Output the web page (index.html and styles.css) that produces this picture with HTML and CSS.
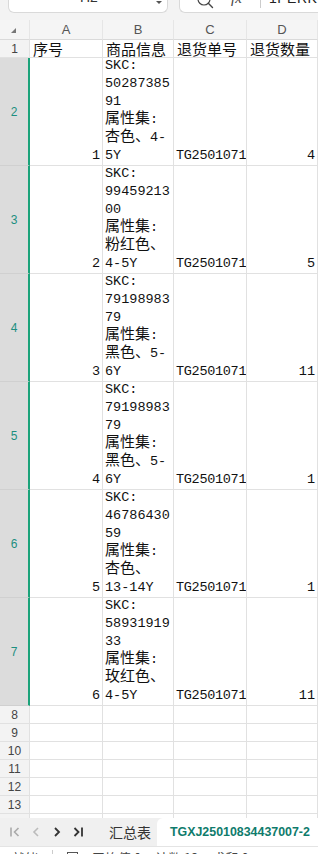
FILE: index.html
```html
<!DOCTYPE html>
<html lang="zh">
<head>
  <meta charset="UTF-8" />
  <meta name="viewport" content="width=device-width, initial-scale=1.0"/>
  <title>TGXJ25010834437007-2</title>
  <link rel="stylesheet" href="styles.css">
</head>
<body>
  <div class="app">
    <!-- Formula bar -->
    <div class="topbar">
      <div class="namebox">
        <span class="name">H2</span>
        <span class="caret"></span>
      </div>
      <div class="formula">
        <svg class="search" width="20" height="10" viewBox="0 0 20 10">
          <circle cx="8" cy="-1" r="6" fill="none" stroke="#444" stroke-width="1.2"/>
          <path d="M12.3 3.3 L16.5 7.5" stroke="#444" stroke-width="1.4" stroke-linecap="round"/>
        </svg>
        <span class="fx">fx</span>
        <span class="sep"></span>
        <span class="ftext">1PERK</span>
      </div>
    </div>

    <!-- Grid -->
    <div class="sheet">
      <div class="row colhead">
        <div class="corner"><span class="tri"></span></div>
        <div>A</div><div>B</div><div>C</div><div>D</div>
      </div>

      <div class="row r-head">
        <div class="rh">1</div>
        <div class="c">序号</div>
        <div class="c">商品信息</div>
        <div class="c">退货单号</div>
        <div class="c">退货数量</div>
      </div>

      <div class="row r-tall sel">
        <div class="rh">2</div>
        <div class="c num">1</div>
        <div class="c wrap"><p>SKC:<br>50287385<br>91<br><span class="zh">属性集</span>:<br><span class="zh">杏色、</span>4-<br>5Y</p></div>
        <div class="c bot">TG2501071</div>
        <div class="c num">4</div>
      </div>

      <div class="row r-tall sel">
        <div class="rh">3</div>
        <div class="c num">2</div>
        <div class="c wrap"><p>SKC:<br>99459213<br>00<br><span class="zh">属性集</span>:<br><span class="zh">粉红色、</span><br>4-5Y</p></div>
        <div class="c bot">TG2501071</div>
        <div class="c num">5</div>
      </div>

      <div class="row r-tall sel">
        <div class="rh">4</div>
        <div class="c num">3</div>
        <div class="c wrap"><p>SKC:<br>79198983<br>79<br><span class="zh">属性集</span>:<br><span class="zh">黑色、</span>5-<br>6Y</p></div>
        <div class="c bot">TG2501071</div>
        <div class="c num">11</div>
      </div>

      <div class="row r-tall sel">
        <div class="rh">5</div>
        <div class="c num">4</div>
        <div class="c wrap"><p>SKC:<br>79198983<br>79<br><span class="zh">属性集</span>:<br><span class="zh">黑色、</span>5-<br>6Y</p></div>
        <div class="c bot">TG2501071</div>
        <div class="c num">1</div>
      </div>

      <div class="row r-tall sel">
        <div class="rh">6</div>
        <div class="c num">5</div>
        <div class="c wrap"><p>SKC:<br>46786430<br>59<br><span class="zh">属性集</span>:<br><span class="zh">杏色、</span><br>13-14Y</p></div>
        <div class="c bot">TG2501071</div>
        <div class="c num">1</div>
      </div>

      <div class="row r-tall sel">
        <div class="rh">7</div>
        <div class="c num">6</div>
        <div class="c wrap"><p>SKC:<br>58931919<br>33<br><span class="zh">属性集</span>:<br><span class="zh">玫红色、</span><br>4-5Y</p></div>
        <div class="c bot">TG2501071</div>
        <div class="c num">11</div>
      </div>

      <div class="row r-empty"><div class="rh">8</div><div class="c"></div><div class="c"></div><div class="c"></div><div class="c"></div></div>
      <div class="row r-empty"><div class="rh">9</div><div class="c"></div><div class="c"></div><div class="c"></div><div class="c"></div></div>
      <div class="row r-empty"><div class="rh">10</div><div class="c"></div><div class="c"></div><div class="c"></div><div class="c"></div></div>
      <div class="row r-empty"><div class="rh">11</div><div class="c"></div><div class="c"></div><div class="c"></div><div class="c"></div></div>
      <div class="row r-empty"><div class="rh">12</div><div class="c"></div><div class="c"></div><div class="c"></div><div class="c"></div></div>
      <div class="row r-empty"><div class="rh">13</div><div class="c"></div><div class="c"></div><div class="c"></div><div class="c"></div></div>
      <div class="row r-cut"><div class="rh"></div><div class="c"></div><div class="c"></div><div class="c"></div><div class="c"></div></div>
    </div>

    <!-- Sheet tabs -->
    <div class="tabbar">
      <div class="nav">
        <svg width="12" height="12" viewBox="0 0 12 12"><path d="M2 1.5 V10.5 M9.5 2 L5.5 6 L9.5 10" fill="none" stroke="#aaa" stroke-width="1.6"/></svg>
        <svg width="12" height="12" viewBox="0 0 12 12"><path d="M8 2 L4 6 L8 10" fill="none" stroke="#bbb" stroke-width="1.6"/></svg>
        <svg width="12" height="12" viewBox="0 0 12 12"><path d="M4 2 L8 6 L4 10" fill="none" stroke="#333" stroke-width="1.8"/></svg>
        <svg width="12" height="12" viewBox="0 0 12 12"><path d="M2.5 2 L6.5 6 L2.5 10 M10 1.5 V10.5" fill="none" stroke="#333" stroke-width="1.8"/></svg>
      </div>
      <div class="tab">汇总表</div>
      <div class="tab active">TGXJ25010834437007-2</div>
    </div>

    <!-- Status bar -->
    <div class="status">
      <span>就绪</span>
      <span class="vsep"></span>
      <span class="box"></span>
      <span>平均值 0</span>
      <span>计数 12</span>
      <span>求和 0</span>
    </div>
  </div>
</body>
</html>
```

FILE: styles.css
```css
* {
  box-sizing: border-box;
  margin: 0;
  padding: 0;
}

html, body {
  width: 318px;
  height: 854px;
  overflow: hidden;
}

body {
  font-family: "Liberation Mono", "Noto Sans CJK SC", monospace;
  background: #fff;
  color: #111;
}

.app {
  display: flex;
  flex-direction: column;
  height: 854px;
}

/* formula bar */
.topbar {
  height: 20px;
  background: #f3f3f3;
  display: flex;
  align-items: flex-start;
  padding-left: 8px;
  flex-shrink: 0;
}

.namebox {
  width: 160px;
  height: 13px;
  background: #fff;
  border: 1px solid #d9d9d9;
  border-top: none;
  border-radius: 0 0 6px 6px;
  position: relative;
  overflow: hidden;
}

.name {
  position: absolute;
  left: 71px;
  top: -11px;
  font-family: "Liberation Sans", sans-serif;
  font-size: 14px;
  line-height: 16px;
  color: #333;
}

.caret {
  position: absolute;
  left: 147px;
  top: 1px;
  border-left: 3px solid transparent;
  border-right: 3px solid transparent;
  border-top: 3px solid #555;
}

.formula {
  margin-left: 11px;
  flex: 1;
  height: 13px;
  background: #fff;
  border: 1px solid #d9d9d9;
  border-top: none;
  border-right: none;
  border-radius: 0 0 0 6px;
  display: flex;
  align-items: flex-start;
  position: relative;
  overflow: hidden;
}

.search {
  margin-left: 16px;
}

.fx {
  position: absolute;
  left: 51px;
  top: -10px;
  font-family: "Liberation Serif", serif;
  font-style: italic;
  font-size: 15px;
  line-height: 16px;
  color: #444;
}

.sep {
  position: absolute;
  left: 80px;
  top: 0;
  width: 1px;
  height: 8px;
  background: #ccc;
}

.ftext {
  position: absolute;
  left: 89px;
  top: -10px;
  font-family: "Liberation Sans", sans-serif;
  font-size: 14px;
  line-height: 16px;
  color: #222;
  letter-spacing: 0.5px;
}

/* grid */
.sheet {
  display: flex;
  flex-direction: column;
  flex-shrink: 0;
}

.row {
  display: grid;
  grid-template-columns: 30px 73px 71px 73px 71px;
}

.row > div {
  border-right: 1px solid #e1e1e1;
  border-bottom: 1px solid #e1e1e1;
  overflow: hidden;
  white-space: nowrap;
}

.colhead {
  height: 20px;
  background: #f5f5f5;
}

.colhead > div {
  border-bottom: 1px solid #dadada;
  border-right: 1px solid #e6e6e6;
  font-family: "Liberation Sans", sans-serif;
  font-size: 13px;
  color: #555;
  display: flex;
  align-items: center;
  justify-content: center;
}

.corner {
  position: relative;
}

.tri {
  position: absolute;
  left: 11px;
  top: 8px;
  border-left: 5px solid transparent;
  border-bottom: 5px solid #777;
}

.rh {
  background: #f3f3f3;
  font-family: "Liberation Sans", sans-serif;
  font-size: 12px;
  color: #444;
  display: flex;
  align-items: center;
  justify-content: center;
}

.sel .rh {
  background: #dcdcdc;
  color: #1d8f80;
  border-right: 2px solid #1ba37a;
  border-bottom-color: #d0d0d0;
}

.c {
  font-size: 13.5px;
  line-height: 18px;
  padding-left: 2px;
}

.zh {
  font-family: "Noto Sans CJK SC", sans-serif;
  font-size: 15px;
  line-height: 12px;
}

.r-head {
  height: 18px;
}

.r-head .c {
  font-family: "Noto Sans CJK SC", sans-serif;
  font-size: 15px;
  line-height: 18px;
  color: #111;
  padding-left: 3px;
}

.r-tall {
  height: 108px;
}

.wrap {
  display: flex;
  flex-direction: column;
  justify-content: flex-end;
}

.wrap p {
  line-height: 18px;
}

.bot {
  display: flex;
  align-items: flex-end;
  letter-spacing: -0.3px;
}

.num {
  display: flex;
  align-items: flex-end;
  justify-content: flex-end;
  padding-right: 2px;
}

.r-empty {
  height: 18px;
}

.r-cut {
  height: 4px;
}

.r-cut > div {
  border-bottom: none;
}

/* tabs */
.tabbar {
  height: 28px;
  background: #f0f0f0;
  display: flex;
  align-items: stretch;
  flex-shrink: 0;
  white-space: nowrap;
}

.nav {
  display: flex;
  align-items: center;
  gap: 9px;
  padding-left: 9px;
  width: 97px;
  flex-shrink: 0;
}

.tab {
  display: flex;
  align-items: center;
  padding: 0 6px 0 12px;
  font-family: "Noto Sans CJK SC", sans-serif;
  font-size: 14px;
  color: #333;
  flex-shrink: 0;
}

.tab.active {
  flex: 1;
  background: #fff;
  border-radius: 6px 0 0 0;
  color: #0f7b6c;
  font-family: "Liberation Sans", sans-serif;
  font-weight: bold;
  font-size: 12.4px;
  padding-left: 13px;
  padding-right: 0;
  overflow: hidden;
}

/* status */
.status {
  flex: 1;
  background: #fff;
  border-top: 1px solid #e4e4e4;
  display: flex;
  align-items: flex-start;
  gap: 14px;
  padding: 3px 0 0 12px;
  font-family: "Noto Sans CJK SC", sans-serif;
  font-size: 13px;
  line-height: 16px;
  color: #444;
  white-space: nowrap;
  overflow: hidden;
}

.vsep {
  width: 1px;
  height: 12px;
  background: #ccc;
  flex-shrink: 0;
}

.box {
  width: 11px;
  height: 11px;
  border: 1px solid #555;
  margin-top: 2px;
  flex-shrink: 0;
}
```
